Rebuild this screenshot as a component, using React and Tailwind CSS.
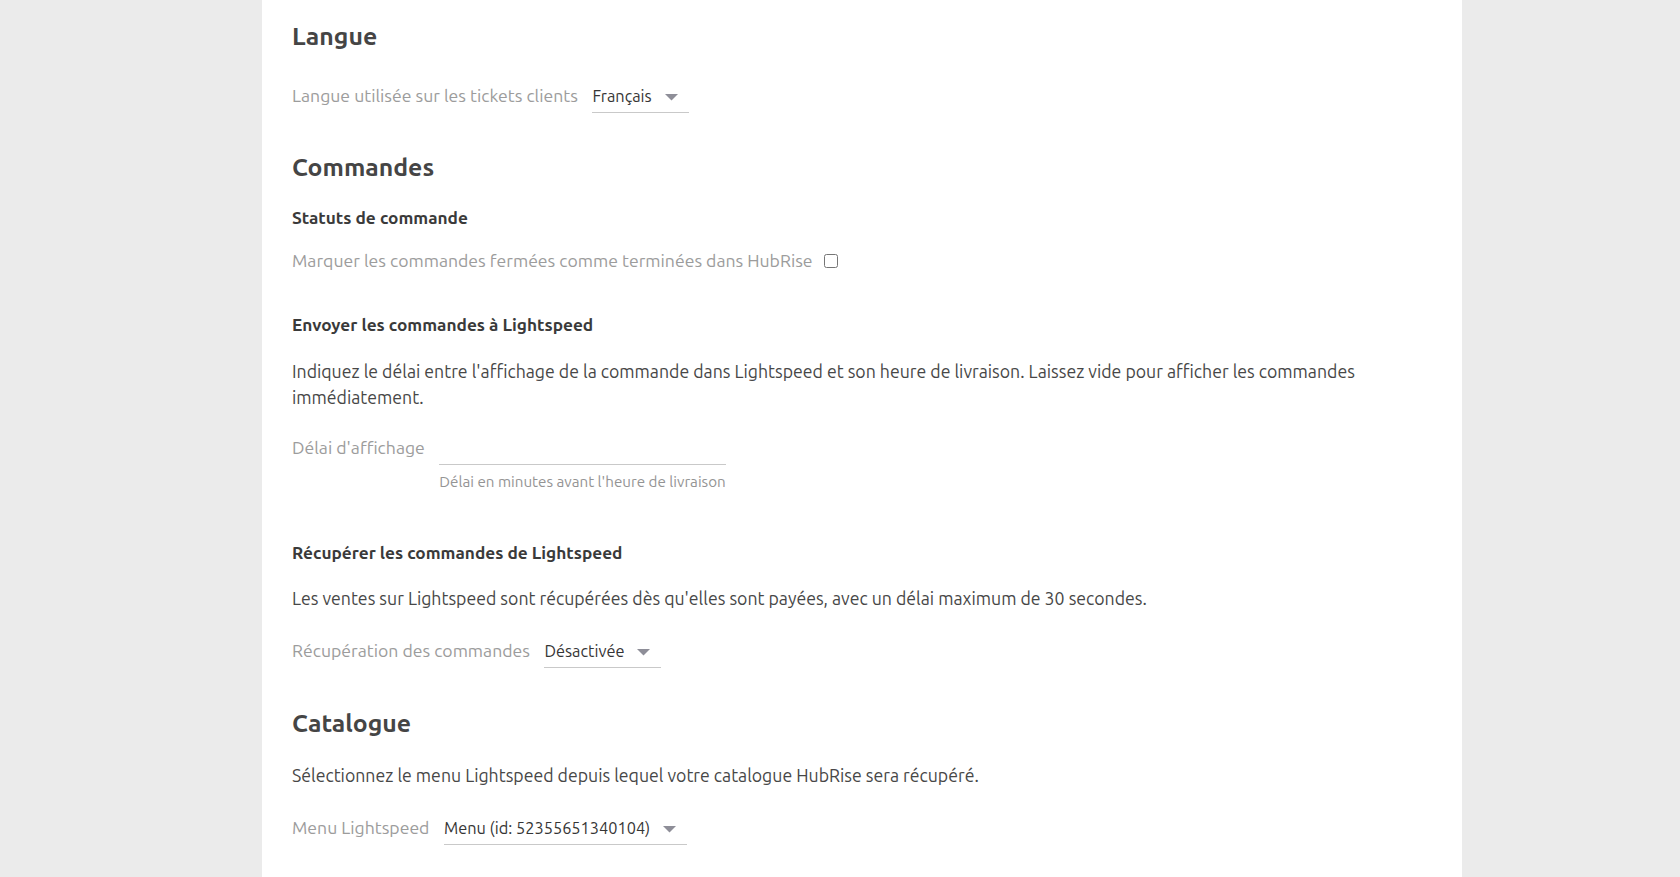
import React from "react";

function Arrow() {
  return (
    <svg width="13" height="7" viewBox="0 0 13 7" className="mt-[11px] ml-[13px] shrink-0">
      <polygon points="0,0 13,0 6.5,6.5" fill="#8e8e98" />
    </svg>
  );
}

function Select({ value }) {
  return (
    <div className="flex items-start pr-[11px] pb-[3px] border-b border-[#c9c9c9] cursor-pointer">
      <span className="text-[16.35px] leading-[26px] text-[#353535] whitespace-nowrap">{value}</span>
      <Arrow />
    </div>
  );
}

function Label({ children }) {
  return (
    <span className="text-[17.65px] leading-[26px] text-[#9c9c9c] whitespace-nowrap">{children}</span>
  );
}

function H1({ children, className = "" }) {
  return (
    <h2 className={"text-[24.8px] leading-[32px] font-bold text-[#454545] " + className}>
      {children}
    </h2>
  );
}

function H3({ children, className = "" }) {
  return (
    <h3 className={"text-[17.25px] leading-[26px] font-bold text-[#3a3a3a] " + className}>
      {children}
    </h3>
  );
}

function P({ children, className = "" }) {
  return <p className={"text-[17.7px] leading-[26px] text-[#474747] " + className}>{children}</p>;
}

export default function App() {
  return (
    <div className="min-h-[877px] bg-[#ebebeb] pl-[262px] font-['Ubuntu','Liberation_Sans',sans-serif]">
      <div className="w-[1200px] min-h-[877px] bg-white px-[30px] pt-[20px] pb-[40px]">
        <H1>Langue</H1>
        <div className="mt-[31px] flex items-start gap-[14.5px]">
          <Label>Langue utilisée sur les tickets clients</Label>
          <Select value="Français" />
        </div>

        <H1 className="mt-[38px]">Commandes</H1>
        <H3 className="mt-[22px]">Statuts de commande</H3>
        <div className="mt-[17px] flex items-center gap-[11px]">
          <Label>Marquer les commandes fermées comme terminées dans HubRise</Label>
          <input type="checkbox" className="m-0 w-[14px] h-[14px]" />
        </div>

        <H3 className="mt-[38px]">Envoyer les commandes à Lightspeed</H3>
        <P className="mt-[21px]">
          Indiquez le délai entre l'affichage de la commande dans Lightspeed et son heure de livraison. Laissez vide
          pour afficher les commandes immédiatement.
        </P>
        <div className="mt-[24px] flex items-start gap-[14.5px]">
          <Label>Délai d'affichage</Label>
          <div className="flex flex-col">
            <input
              type="text"
              className="w-[287px] h-[30px] bg-transparent border-b border-[#c9c9c9] outline-none text-[16.35px] text-[#353535]"
            />
            <span className="mt-[7px] text-[15.2px] leading-[20px] text-[#949494] whitespace-nowrap">
              Délai en minutes avant l'heure de livraison
            </span>
          </div>
        </div>

        <H3 className="mt-[48px]">Récupérer les commandes de Lightspeed</H3>
        <P className="mt-[20px]">
          Les ventes sur Lightspeed sont récupérées dès qu'elles sont payées, avec un délai maximum de 30 secondes.
        </P>
        <div className="mt-[26px] flex items-start gap-[14.5px]">
          <Label>Récupération des commandes</Label>
          <Select value="Désactivée" />
        </div>

        <H1 className="mt-[39px]">Catalogue</H1>
        <P className="mt-[24px]">
          Sélectionnez le menu Lightspeed depuis lequel votre catalogue HubRise sera récupéré.
        </P>
        <div className="mt-[26px] flex items-start gap-[14.5px]">
          <Label>Menu Lightspeed</Label>
          <Select value="Menu (id: 52355651340104)" />
        </div>
      </div>
    </div>
  );
}
